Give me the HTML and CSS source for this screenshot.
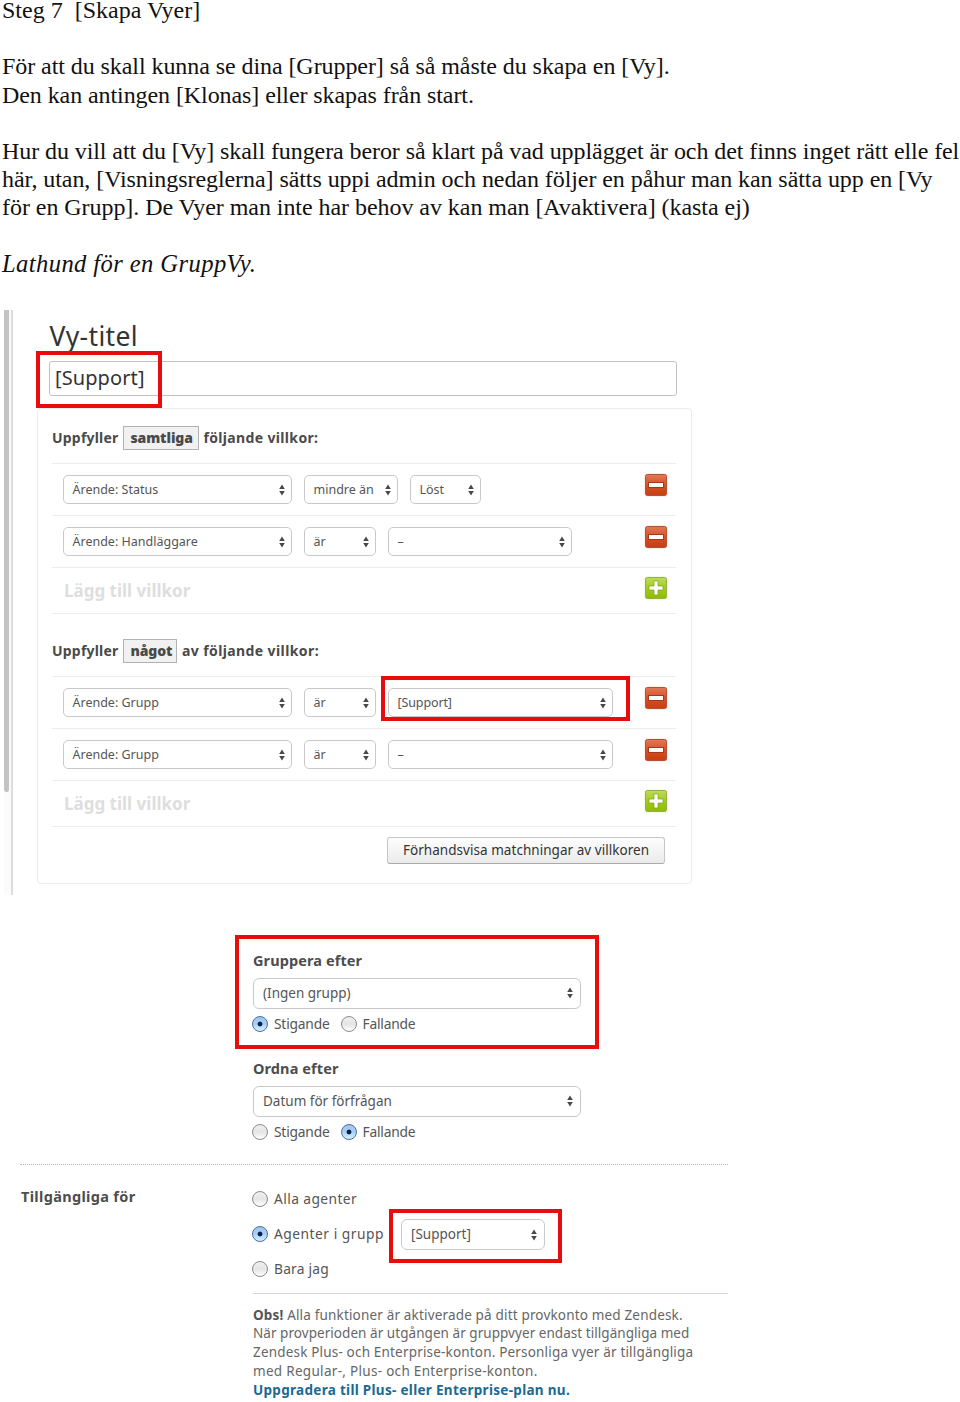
FILE: index.html
```
<!DOCTYPE html>
<html lang="sv">
<head>
<meta charset="utf-8">
<title>Skapa Vyer</title>
<link rel="stylesheet" href="styles.css">
</head>
<body>
<svg class="defs" width="0" height="0">
  <defs>
    <linearGradient id="red" x1="0" y1="0" x2="0" y2="1"><stop offset="0" stop-color="#e27a5c"/><stop offset=".5" stop-color="#d64f27"/><stop offset="1" stop-color="#c63f12"/></linearGradient>
    <linearGradient id="green" x1="0" y1="0" x2="0" y2="1"><stop offset="0" stop-color="#bfdc5c"/><stop offset=".5" stop-color="#a2cb1c"/><stop offset="1" stop-color="#8fbb08"/></linearGradient>
    <symbol id="minus" viewBox="0 0 24 24"><rect x=".5" y=".5" width="23" height="23" rx="3" fill="#f7e4d6"/><rect x="1.5" y="1.5" width="21" height="21" rx="2" fill="url(#red)" stroke="#b9502f"/><rect x="4.500" y="9.500" width="15" height="5" fill="#fff" stroke="#a53a18"/></symbol>
    <symbol id="plus" viewBox="0 0 24 24"><rect x=".5" y=".5" width="23" height="23" rx="3" fill="#eef3d6"/><rect x="1.5" y="1.5" width="21" height="21" rx="2" fill="url(#green)" stroke="#93b43a"/><path d="M10 5h4v5h5v4h-5v5h-4v-5h-5v-4h5z" fill="#fff" stroke="#7da010" stroke-width=".7"/></symbol>
    <symbol id="arrows" viewBox="0 0 6 12"><path d="M3 .6 5.800 5H.2zM3 11.400 5.800 7H.2z" fill="#484848"/></symbol>
  </defs>
</svg>
<main class="page">
  <section class="intro">
    <p><span class="l1">Steg 7&nbsp; [Skapa Vyer]</span></p>
    <p><span class="l2">För att du skall kunna se dina [Grupper] så så måste du skapa en [Vy].</span><br><span class="l3">Den kan antingen [Klonas] eller skapas från start.</span></p>
    <p><span class="l4">Hur du vill att du [Vy] skall fungera beror så klart på vad upplägget är och det finns inget rätt elle fel</span><br><span class="l5">här, utan, [Visningsreglerna] sätts uppi admin och nedan följer en påhur man kan sätta upp en [Vy</span><br><span class="l6">för en Grupp]. De Vyer man inte har behov av kan man [Avaktivera] (kasta ej)</span></p>
    <p class="em"><span class="l7">Lathund för en GruppVy.</span></p>
  </section>

  <section class="editor">
    <div class="scroll"><div class="thumb"></div></div>
    <div class="form">
      <h1 class="title"><span>Vy-titel</span></h1>
      <div class="title-input"><span>[Support]</span><i class="mark mark-title"></i></div>
      <div class="panel">
        <div class="head"><span class="h-a">Uppfyller</span><b class="chip"><span>samtliga</span></b><span class="h-b">följande villkor:</span></div>
        <div class="row">
          <div class="select w229"><span>Ärende: Status</span><svg><use href="#arrows"/></svg></div>
          <div class="select w94"><span>mindre än</span><svg><use href="#arrows"/></svg></div>
          <div class="select w71"><span>Löst</span><svg><use href="#arrows"/></svg></div>
          <svg class="act"><use href="#minus"/></svg>
        </div>
        <div class="row">
          <div class="select w229"><span>Ärende: Handläggare</span><svg><use href="#arrows"/></svg></div>
          <div class="select w72"><span>är</span><svg><use href="#arrows"/></svg></div>
          <div class="select w184"><span>–</span><svg><use href="#arrows"/></svg></div>
          <svg class="act"><use href="#minus"/></svg>
        </div>
        <div class="row add"><span>Lägg till villkor</span><svg class="act"><use href="#plus"/></svg></div>
        <div class="head second"><span class="h-a">Uppfyller</span><b class="chip any"><span>något</span></b><span class="h-c">av följande villkor:</span></div>
        <div class="row">
          <div class="select w229"><span>Ärende: Grupp</span><svg><use href="#arrows"/></svg></div>
          <div class="select w72"><span>är</span><svg><use href="#arrows"/></svg></div>
          <div class="select w225"><span class="s6">[Support]</span><svg><use href="#arrows"/></svg><i class="mark mark-group"></i></div>
          <svg class="act"><use href="#minus"/></svg>
        </div>
        <div class="row">
          <div class="select w229"><span>Ärende: Grupp</span><svg><use href="#arrows"/></svg></div>
          <div class="select w72"><span>är</span><svg><use href="#arrows"/></svg></div>
          <div class="select w225"><span>–</span><svg><use href="#arrows"/></svg></div>
          <svg class="act"><use href="#minus"/></svg>
        </div>
        <div class="row add"><span>Lägg till villkor</span><svg class="act"><use href="#plus"/></svg></div>
        <div class="foot"><div class="button"><span>Förhandsvisa matchningar av villkoren</span></div></div>
      </div>
    </div>
  </section>

  <section class="sorting">
    <div class="group boxed">
      <h2>Gruppera efter</h2>
      <div class="select big"><span>(Ingen grupp)</span><svg><use href="#arrows"/></svg></div>
      <div class="radios"><i class="radio on"></i><span>Stigande</span><i class="radio"></i><span>Fallande</span></div>
    </div>
    <div class="group">
      <h2>Ordna efter</h2>
      <div class="select big"><span>Datum för förfrågan</span><svg><use href="#arrows"/></svg></div>
      <div class="radios"><i class="radio"></i><span>Stigande</span><i class="radio on"></i><span>Fallande</span></div>
    </div>
  </section>

  <section class="access">
    <h2>Tillgängliga för</h2>
    <div class="choices">
      <div class="choice"><i class="radio"></i><span class="c1">Alla agenter</span></div>
      <div class="choice"><i class="radio on"></i><span class="c2">Agenter i grupp</span><div class="select big"><span>[Support]</span><svg><use href="#arrows"/></svg><i class="mark mark-agent"></i></div></div>
      <div class="choice"><i class="radio"></i><span class="c3">Bara jag</span></div>
      <p class="note"><span class="n1"><b>Obs!</b> Alla funktioner är aktiverade på ditt provkonto med Zendesk.</span><br><span class="n2">När provperioden är utgången är gruppvyer endast tillgängliga med</span><br><span class="n3">Zendesk Plus- och Enterprise-konton. Personliga vyer är tillgängliga</span><br><span class="n4">med Regular-, Plus- och Enterprise-konton.</span><br><a class="n5">Uppgradera till Plus- eller Enterprise-plan nu.</a></p>
    </div>
  </section>
</main>
</body>
</html>
```
FILE: styles.css
```
* { box-sizing: border-box; }
body { margin: 0; background: #fff; }
.defs { position: absolute; }
.page { width: 960px; height: 1402px; overflow: hidden; font-family: "Noto Sans", sans-serif; color: #4d4d4d; }
span, a { white-space: nowrap; }
h1, h2, p { margin: 0; }

.intro { display: flow-root; height: 310px; padding-left: 2px; font: 24px/28.200px "Liberation Serif", serif; color: #111; }
.intro p { margin-bottom: 28.200px; }
.intro p:first-child { margin-top: -4px; }
.em { font-style: italic; font-size: 24.600px; }
.l2 { letter-spacing: -.07px; }
.l3, .l4 { letter-spacing: -.08px; }
.l5 { letter-spacing: -.07px; }
.l6 { letter-spacing: -.05px; }
.l7 { letter-spacing: .4px; }

.editor { display: flex; height: 585px; padding-left: 4px; }
.scroll { width: 9px; border-right: 2px solid #dcdcdc; background: #fbfbfb; }
.thumb { width: 5px; height: 482px; background: #c3c3c3; border-radius: 0 0 4px 3px; }
.form { margin-left: 24px; width: 655px; }
.title { padding: 7px 0 0 12.500px; height: 51px; font-size: 26.500px; line-height: 38px; font-weight: 400; letter-spacing: .35px; color: #333; }
.title-input { position: relative; margin-left: 12px; width: 628px; height: 35px; padding-left: 5px; border: 1px solid #c2c2c2; border-radius: 3px; font-size: 20px; line-height: 32px; letter-spacing: .1px; color: #333; }
.mark { position: absolute; border: 4px solid #e80c0c; }
.mark-title { left: -14px; top: -11px; width: 126px; height: 57px; }
.panel { margin-top: 12px; height: 476px; border: 1px solid #ececec; border-radius: 4px; padding: 0 15px 0 14px; }
.head { display: flex; height: 54px; padding-top: 17px; line-height: 24px; font-size: 14px; font-weight: 700; color: #4a4a4a; }
.h-a { letter-spacing: .2px; }
.h-b { letter-spacing: .35px; }
.h-c { margin-left: .5px; letter-spacing: .4px; }
.chip { width: 76px; height: 24px; margin: 0 4px 0 5px; padding-left: 6px; line-height: 22px; letter-spacing: -.1px; border: 1px solid #b2b2b2; background: #f1f1f1; }
.chip.any { width: 54px; }
.second { height: 63px; padding-top: 25px; border-top: 1px solid #ececec; }
.row { display: flex; gap: 12px; height: 52px; padding: 11px 0 0 11px; border-top: 1px solid #ececec; }
.select { position: relative; display: flex; align-items: center; justify-content: space-between; height: 29px; padding: 0 6px 1px 8.500px; border: 1px solid #c9c9c9; border-radius: 5px; font-size: 12.500px; color: #555; background: #fff; }
.select svg { width: 6px; height: 12px; margin-top: 1px; }
.w229 { width: 229px; }
.w94 { width: 94px; }
.w71 { width: 71px; }
.w72 { width: 72px; }
.w184 { width: 184px; }
.w225 { width: 225px; }
.s6 { letter-spacing: -.12px; }
.act { width: 24px; height: 24px; margin: -2px 8px 0 auto; }
.row.add { height: 46px; padding: 10px 0 0 12px; font-size: 17px; line-height: 26px; font-weight: 700; color: #dedede; }
.mark-group { left: -8px; top: -13px; width: 249px; height: 45px; }
.foot { border-top: 1px solid #ececec; padding: 10px 11px 0 0; display: flex; justify-content: flex-end; }
.button { width: 278px; height: 27px; padding-left: 15px; border: 1px solid #c6c6c6; border-bottom-color: #aaa; border-radius: 3px; background: linear-gradient(#fdfdfd, #ebebeb); font-size: 13.500px; line-height: 25px; letter-spacing: .04px; color: #333; }

.sorting { padding: 40px 0 0 235px; height: 269px; }
.group { width: 364px; height: 114px; padding: 7px 18px 0; }
.boxed { border: 4px solid #e80c0c; padding: 9px 14px 0; }
h2 { font-size: 14.500px; line-height: 24px; letter-spacing: .1px; color: #4d4d4d; font-weight: 700; }
.group h2 { height: 30px; }
.select.big { height: 31px; width: 328px; padding: 0 7px 2px 9px; font-size: 13.500px; border-radius: 6px; }
.radios, .choice { display: flex; align-items: center; font-size: 13.800px; color: #555; }
.radios { height: 30px; letter-spacing: -.2px; }
.radio { flex: none; width: 16px; height: 16px; margin-left: -1px; margin-right: 6px; border: 1px solid #8c8c8c; border-radius: 50%; background: linear-gradient(#f0f0f0, #e4e4e4 50%, #fff); }
.radio.on { border-color: #4d6f9c; background: radial-gradient(circle, #0a2145 0 2px, transparent 2.800px), linear-gradient(#9fc4ee, #a8d0f6 50%, #d8f2ff); }
.radios span { width: 67.500px; margin-top: -1.500px; }

.access { display: flex; width: 708px; margin-left: 20px; border-top: 1px dotted #b5b5b5; }
.access h2 { width: 233px; padding: 19px 0 0 1px; letter-spacing: .33px; }
.choices { flex: 1; padding-top: 16px; }
.choice { height: 35px; }
.c1 { letter-spacing: .4px; }
.c2 { letter-spacing: .5px; }
.c3 { letter-spacing: .2px; }
.choice .select { width: 144px; margin: 1px 0 0 17px; padding-bottom: 0; }
.mark-agent { left: -13px; top: -11px; width: 173px; height: 54px; }
.note { margin-top: 7px; padding-top: 11.500px; border-top: 1px solid #d5d5d5; font-size: 13.500px; line-height: 18.950px; color: #666; }
.note b { color: #555; }
.note a { color: #1b6a92; font-weight: 700; }
.n1 { letter-spacing: .17px; }
.n2 { letter-spacing: .05px; }
.n3 { letter-spacing: .18px; }
.n4, .n5 { letter-spacing: .3px; }
```
